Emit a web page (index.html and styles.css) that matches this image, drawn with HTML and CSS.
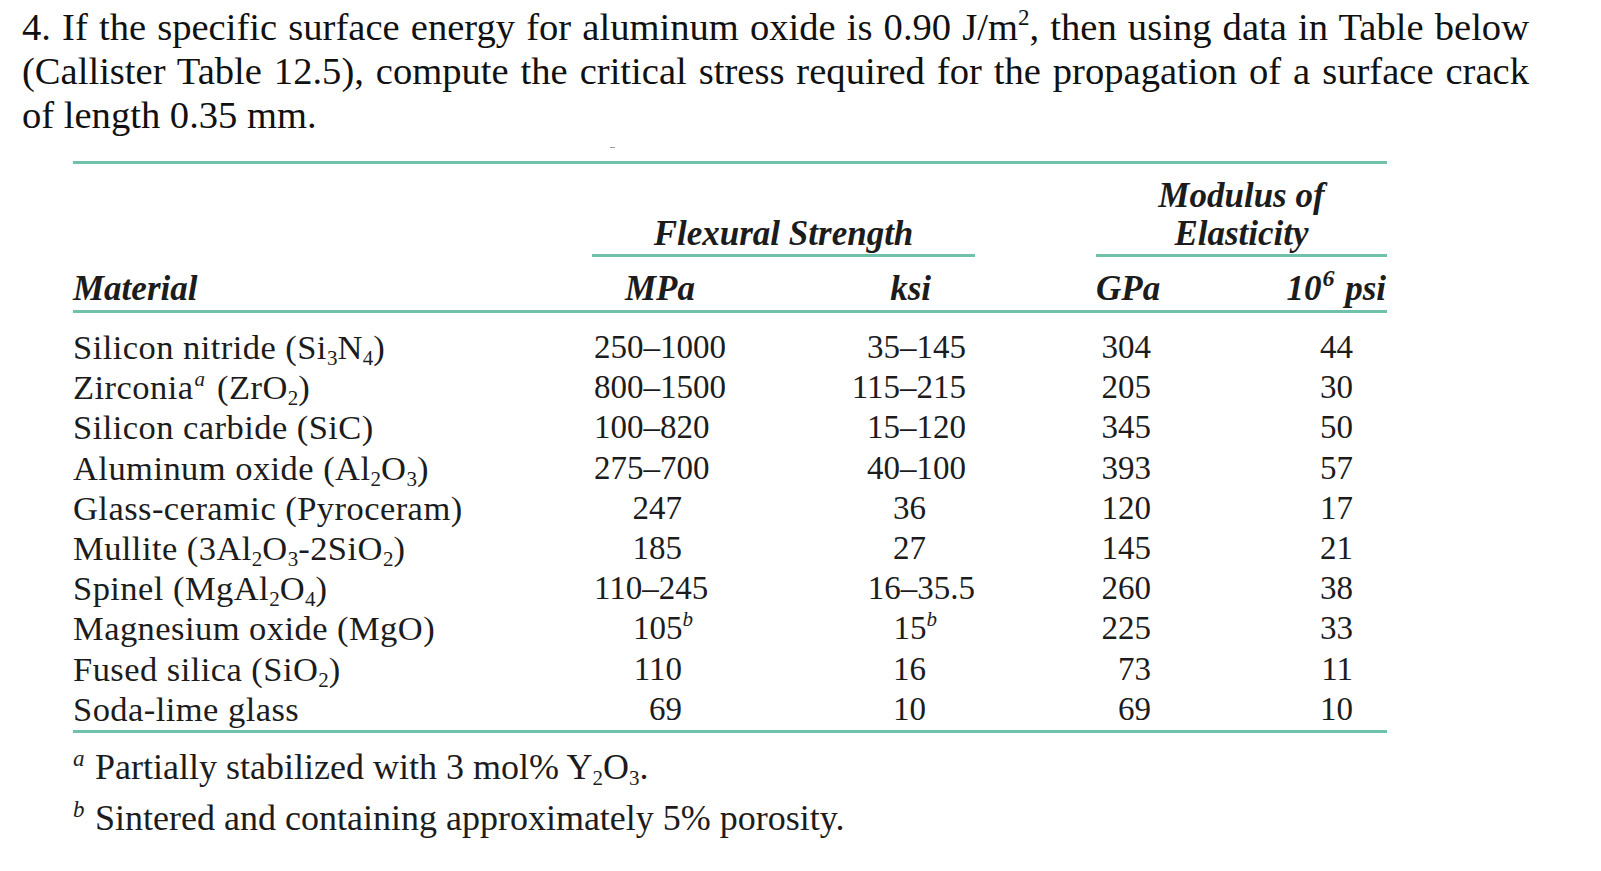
FILE: index.html
```html
<!DOCTYPE html>
<html lang="en">
<head>
<meta charset="utf-8">
<title>Callister Table 12.5</title>
<link rel="stylesheet" href="styles.css">
</head>
<body>
<div class="page">
  <p class="question">
    <span class="qline full">4. If the specific surface energy for aluminum oxide is 0.90 J/m<sup class="qsup">2</sup>, then using data in Table below</span>
    <span class="qline full">(Callister Table 12.5), compute the critical stress required for the propagation of a surface crack</span>
    <span class="qline">of length 0.35 mm.</span>
  </p>
  <span class="speck"></span>

  <div class="tbl">
    <div class="row head1">
      <div class="c-mat"></div>
      <div class="grp grp-flex">Flexural Strength</div>
      <div class="c-gap"></div>
      <div class="grp grp-mod">Modulus of<br>Elasticity</div>
    </div>
    <div class="row head2">
      <div class="c-mat">Material</div>
      <div class="h-mpa">MPa</div>
      <div class="h-ksi">ksi</div>
      <div class="c-gap"></div>
      <div class="h-gpa">GPa</div>
      <div class="h-psi">10<sup class="hsup">6</sup> psi</div>
    </div>
    <div class="body">
      <div class="row">
        <div class="c-mat">Silicon nitride (Si<sub>3</sub>N<sub>4</sub>)</div>
        <div class="mpa rng">250–1000</div>
        <div class="ksi rng">35–145</div>
        <div class="c-gap"></div>
        <div class="gpa">304</div>
        <div class="psi">44</div>
      </div>
      <div class="row">
        <div class="c-mat">Zirconia<sup class="fn">a</sup> (ZrO<sub>2</sub>)</div>
        <div class="mpa rng">800–1500</div>
        <div class="ksi rng">115–215</div>
        <div class="c-gap"></div>
        <div class="gpa">205</div>
        <div class="psi">30</div>
      </div>
      <div class="row">
        <div class="c-mat">Silicon carbide (SiC)</div>
        <div class="mpa rng">100–820</div>
        <div class="ksi rng">15–120</div>
        <div class="c-gap"></div>
        <div class="gpa">345</div>
        <div class="psi">50</div>
      </div>
      <div class="row">
        <div class="c-mat">Aluminum oxide (Al<sub>2</sub>O<sub>3</sub>)</div>
        <div class="mpa rng">275–700</div>
        <div class="ksi rng">40–100</div>
        <div class="c-gap"></div>
        <div class="gpa">393</div>
        <div class="psi">57</div>
      </div>
      <div class="row">
        <div class="c-mat">Glass-ceramic (Pyroceram)</div>
        <div class="mpa one">247</div>
        <div class="ksi one">36</div>
        <div class="c-gap"></div>
        <div class="gpa">120</div>
        <div class="psi">17</div>
      </div>
      <div class="row">
        <div class="c-mat">Mullite (3Al<sub>2</sub>O<sub>3</sub>-2SiO<sub>2</sub>)</div>
        <div class="mpa one">185</div>
        <div class="ksi one">27</div>
        <div class="c-gap"></div>
        <div class="gpa">145</div>
        <div class="psi">21</div>
      </div>
      <div class="row">
        <div class="c-mat">Spinel (MgAl<sub>2</sub>O<sub>4</sub>)</div>
        <div class="mpa rng">110–245</div>
        <div class="ksi rng dec">16–35.5</div>
        <div class="c-gap"></div>
        <div class="gpa">260</div>
        <div class="psi">38</div>
      </div>
      <div class="row">
        <div class="c-mat">Magnesium oxide (MgO)</div>
        <div class="mpa one">105<sup class="fn hang">b</sup></div>
        <div class="ksi one">15<sup class="fn hang">b</sup></div>
        <div class="c-gap"></div>
        <div class="gpa">225</div>
        <div class="psi">33</div>
      </div>
      <div class="row">
        <div class="c-mat">Fused silica (SiO<sub>2</sub>)</div>
        <div class="mpa one">110</div>
        <div class="ksi one">16</div>
        <div class="c-gap"></div>
        <div class="gpa">73</div>
        <div class="psi">11</div>
      </div>
      <div class="row">
        <div class="c-mat">Soda-lime glass</div>
        <div class="mpa one">69</div>
        <div class="ksi one">10</div>
        <div class="c-gap"></div>
        <div class="gpa">69</div>
        <div class="psi">10</div>
      </div>
    </div>
  </div>

  <div class="notes">
    <p class="note"><sup class="nmark">a</sup>Partially stabilized with 3 mol% Y<sub>2</sub>O<sub>3</sub>.</p>
    <p class="note"><sup class="nmark">b</sup>Sintered and containing approximately 5% porosity.</p>
  </div>
</div>
</body>
</html>
```

FILE: styles.css
```css
html, body {
  margin: 0;
  padding: 0;
  background: #ffffff;
}

body {
  font-family: "Liberation Serif", "Times New Roman", serif;
  color: #1c1c1c;
}

.page {
  position: relative;
  width: 1601px;
  height: 871px;
  overflow: hidden;
}

/* ---------- question ---------- */
.question {
  margin: 0;
  padding: 5px 0 0 22px;
  width: 1507px;
  font-size: 38.6px;
  line-height: 44px;
  color: #111111;
}

.qline {
  display: block;
  white-space: nowrap;
}

.qline.full {
  text-align: justify;
  text-align-last: justify;
}

.qsup {
  font-size: 23px;
  line-height: 0;
  vertical-align: 15px;
}

.speck {
  position: absolute;
  left: 610px;
  top: 147px;
  width: 5px;
  height: 1px;
  background: #9a9a9a;
}

/* ---------- table ---------- */
.tbl {
  margin: 24px 0 0 73px;
  width: 1314px;
  border-top: 3px solid #6fc1ac;
}

.row {
  display: grid;
  grid-template-columns: 519px 188px 195px 121px 144px 147px;
  font-size: 33px;
}

.head1,
.head2 {
  font-weight: bold;
  font-style: italic;
  font-size: 35px;
  line-height: 38px;
}

.head1 {
  padding-top: 13px;
  align-items: end;
}

.grp {
  text-align: center;
  padding-bottom: 1px;
  border-bottom: 3px solid #6fc1ac;
}

.grp-flex {
  grid-column: 2 / span 2;
}

.grp-mod {
  grid-column: 5 / span 2;
}

.head2 {
  padding: 13px 0 2px;
  border-bottom: 3px solid #6fc1ac;
}

.h-mpa {
  padding-left: 33px;
}

.h-ksi {
  text-align: right;
  padding-right: 44px;
}

.h-gpa {
  padding-left: 0;
}

.h-psi {
  text-align: right;
  padding-right: 1px;
}

.hsup {
  font-size: 24px;
  line-height: 0;
  vertical-align: 14px;
  margin-left: 1px;
  margin-right: 2px;
}

.body {
  padding: 14px 0 1px;
  border-bottom: 3px solid #6fc1ac;
}

.body .row {
  line-height: 40.2px;
}

.body .c-mat {
  font-size: 34.5px;
  letter-spacing: 0.45px;
}

.c-mat {
  white-space: nowrap;
}

sub {
  font-size: 21px;
  line-height: 0;
  vertical-align: -6px;
  letter-spacing: 0;
}

.fn {
  font-style: italic;
  font-size: 21px;
  line-height: 0;
  vertical-align: 13px;
  letter-spacing: 0;
}

.c-mat .fn {
  margin: 0 3px 0 1px;
}

.hang {
  margin-right: -11px;
}

.mpa.rng {
  padding-left: 2px;
}

.mpa.one {
  text-align: right;
  padding-right: 98px;
}

.ksi.rng {
  text-align: right;
  padding-right: 9px;
}

.ksi.rng.dec {
  padding-right: 0;
}

.ksi.one {
  text-align: right;
  padding-right: 49px;
}

.gpa {
  text-align: right;
  padding-right: 89px;
}

.psi {
  text-align: right;
  padding-right: 34px;
}

/* ---------- footnotes ---------- */
.notes {
  margin: 9px 0 0 73px;
}

.note {
  margin: 0;
  font-size: 36px;
  line-height: 51px;
  white-space: nowrap;
}

.nmark {
  display: inline-block;
  width: 22px;
  font-style: italic;
  font-size: 23px;
  line-height: 0;
  vertical-align: 13px;
}
```
